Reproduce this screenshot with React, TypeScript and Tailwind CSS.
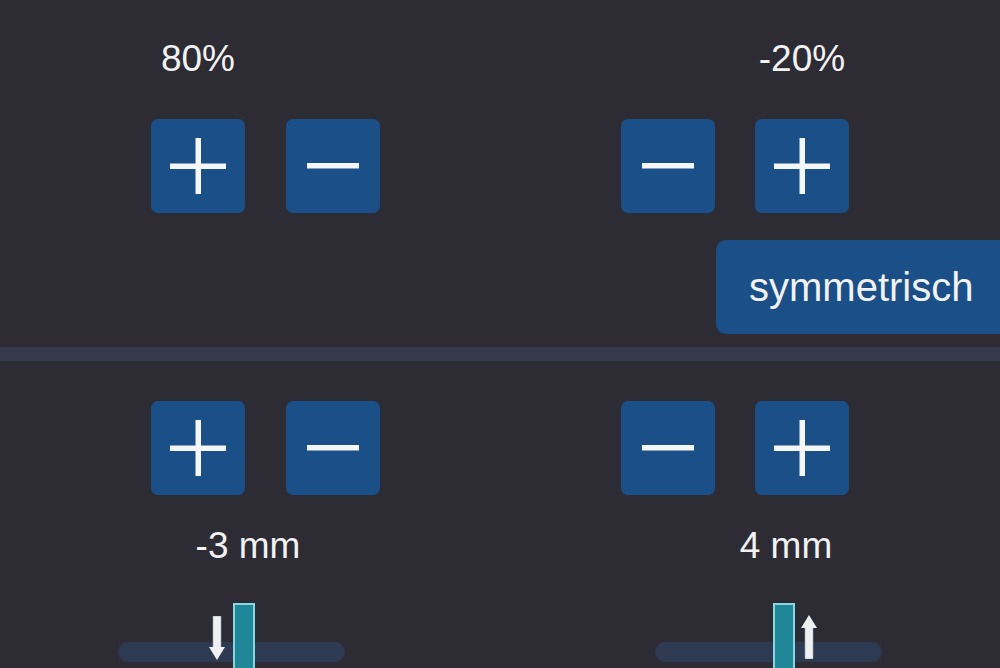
import React from "react";

const PlusBtn = () => (
    <div className="w-[94px] h-[94px] rounded-[7px] bg-[#1a4f87] flex items-center justify-center shrink-0">
        <svg width="56" height="56" viewBox="0 0 56 56">
            <rect x="0" y="25.5" width="56" height="5.5" fill="#f4f6f8" />
            <rect x="25.5" y="0" width="5.5" height="56" fill="#f4f6f8" />
        </svg>
    </div>
);

const MinusBtn = () => (
    <div className="w-[94px] h-[94px] rounded-[7px] bg-[#1a4f87] flex items-center justify-center shrink-0">
        <svg width="52" height="6" viewBox="0 0 52 6">
            <rect x="0" y="0" width="52" height="5.5" fill="#f4f6f8" />
        </svg>
    </div>
);

const Arrow = ({ up }: { up?: boolean }) => (
    <svg width="16" height="44" viewBox="0 0 16 44" className={up ? "rotate-180" : ""}>
        <rect x="4" y="0" width="8" height="33" fill="#eef0f2" stroke="#9aa0a8" strokeWidth="0.6" />
        <polygon points="0,31 16,31 8,44" fill="#eef0f2" />
    </svg>
);

const Slider = ({ barLeft, arrowLeft, up }: { barLeft: number; arrowLeft: number; up?: boolean }) => (
    <div className="relative w-[227px] h-[65px]">
        <div className="absolute left-0 top-[39px] w-[227px] h-[20px] rounded-full bg-[#2e3a51]" />
        <div
            className="absolute top-0 w-[22px] h-[80px] border-2 border-[#8ad6e0] bg-[#1f8797]"
            style={{ left: barLeft }}
        />
        <div className="absolute" style={{ left: arrowLeft, top: up ? 12 : 13 }}>
            <Arrow up={up} />
        </div>
    </div>
);

const App = () => {
    return (
        <div className="w-[1000px] h-[668px] overflow-hidden bg-[#2d2c35] text-[#f2f2f2] font-['Liberation_Sans',Arial,sans-serif]">
            {/* obere Hälfte */}
            <div className="h-[347px] flex">
                <div className="w-[500px] pl-[151px] pt-[39px]">
                    <div className="w-[94px] text-center text-[37px] leading-[40px]">80%</div>
                    <div className="flex gap-[41px] mt-[40px]">
                        <PlusBtn />
                        <MinusBtn />
                    </div>
                </div>
                <div className="w-[500px] pt-[39px]">
                    <div className="ml-[255px] w-[94px] text-center text-[37px] leading-[40px] whitespace-nowrap">-20%</div>
                    <div className="flex gap-[40px] mt-[40px] pl-[121px]">
                        <MinusBtn />
                        <PlusBtn />
                    </div>
                    <div className="ml-[216px] mt-[27px] w-[320px] h-[94px] rounded-[10px] bg-[#1a4f87] flex items-center pl-[33px] text-[40px]">
                        symmetrisch
                    </div>
                </div>
            </div>

            <div className="h-[14px] bg-[#353a4d]" />

            {/* untere Hälfte */}
            <div className="flex pt-[40px]">
                <div className="w-[500px]">
                    <div className="flex gap-[41px] pl-[151px]">
                        <PlusBtn />
                        <MinusBtn />
                    </div>
                    <div className="ml-[148px] w-[200px] mt-[31px] text-center text-[37px] leading-[40px]">-3 mm</div>
                    <div className="ml-[118px] mt-[37px]">
                        <Slider barLeft={115} arrowLeft={91} />
                    </div>
                </div>
                <div className="w-[500px]">
                    <div className="flex gap-[40px] pl-[121px]">
                        <MinusBtn />
                        <PlusBtn />
                    </div>
                    <div className="ml-[186px] w-[200px] mt-[31px] text-center text-[37px] leading-[40px]">4 mm</div>
                    <div className="ml-[155px] mt-[37px]">
                        <Slider barLeft={118} arrowLeft={146} up />
                    </div>
                </div>
            </div>
        </div>
    );
};

export default App;
